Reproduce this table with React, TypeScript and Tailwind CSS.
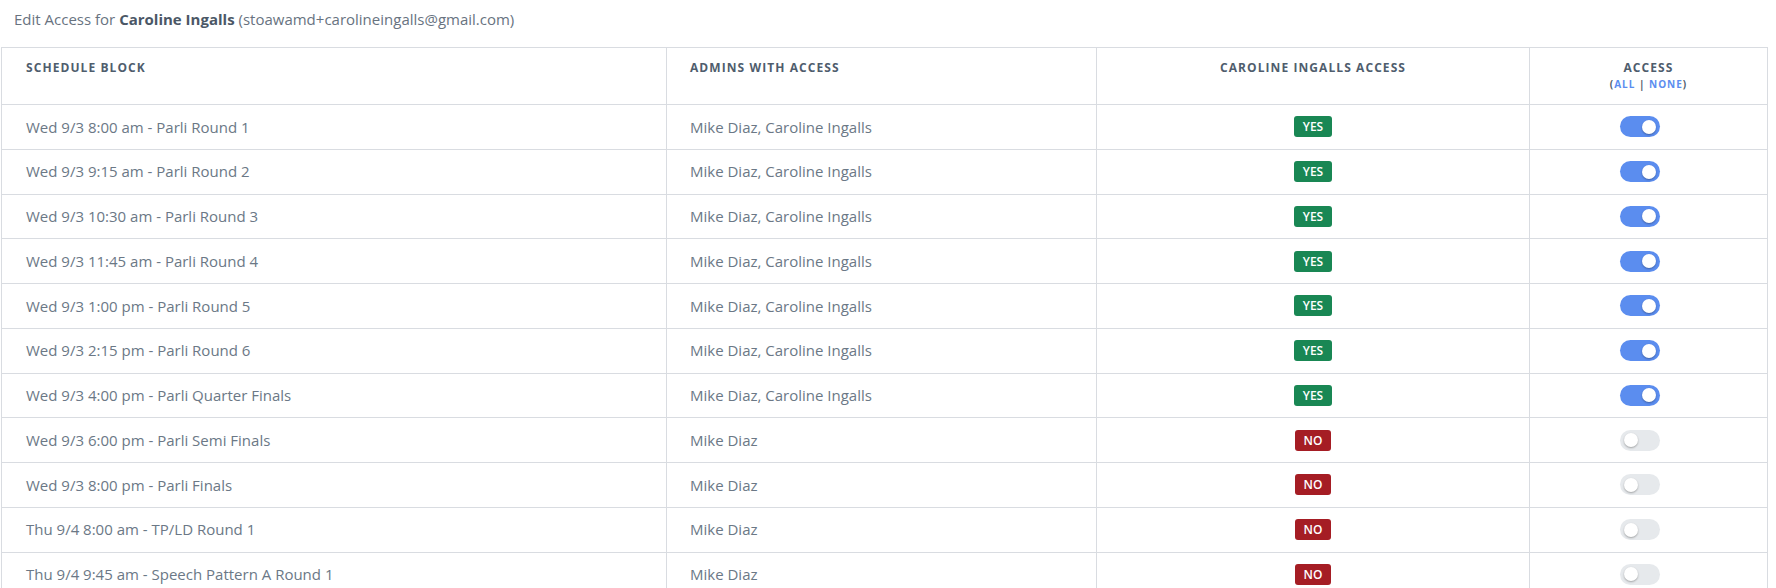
import React from 'react';

type Row = { block: string; admins: string; access: boolean };

const rows: Row[] = [
  { block: 'Wed 9/3 8:00 am - Parli Round 1', admins: 'Mike Diaz, Caroline Ingalls', access: true },
  { block: 'Wed 9/3 9:15 am - Parli Round 2', admins: 'Mike Diaz, Caroline Ingalls', access: true },
  { block: 'Wed 9/3 10:30 am - Parli Round 3', admins: 'Mike Diaz, Caroline Ingalls', access: true },
  { block: 'Wed 9/3 11:45 am - Parli Round 4', admins: 'Mike Diaz, Caroline Ingalls', access: true },
  { block: 'Wed 9/3 1:00 pm - Parli Round 5', admins: 'Mike Diaz, Caroline Ingalls', access: true },
  { block: 'Wed 9/3 2:15 pm - Parli Round 6', admins: 'Mike Diaz, Caroline Ingalls', access: true },
  { block: 'Wed 9/3 4:00 pm - Parli Quarter Finals', admins: 'Mike Diaz, Caroline Ingalls', access: true },
  { block: 'Wed 9/3 6:00 pm - Parli Semi Finals', admins: 'Mike Diaz', access: false },
  { block: 'Wed 9/3 8:00 pm - Parli Finals', admins: 'Mike Diaz', access: false },
  { block: 'Thu 9/4 8:00 am - TP/LD Round 1', admins: 'Mike Diaz', access: false },
  { block: 'Thu 9/4 9:45 am - Speech Pattern A Round 1', admins: 'Mike Diaz', access: false },
];

const cols = 'grid grid-cols-[665px_430px_433px_1fr]';
const th = 'border-r border-[#d9dce1] pt-[12px] text-[12px] font-bold uppercase leading-[15px] tracking-[0.09em] text-[#4f5d6d]';

function Toggle({ on }: { on: boolean }) {
  return (
    <span
      className={`relative inline-flex h-[21px] w-[40px] items-center rounded-full ${
        on ? 'bg-[#5b8def]' : 'bg-[#e6e9ec]'
      }`}
    >
      <span
        className={`absolute top-[3.5px] h-[14px] w-[14px] rounded-full bg-white shadow-[0_1px_2px_rgba(0,0,0,0.3)] ${
          on ? 'left-[22px]' : 'left-[4px]'
        }`}
      />
    </span>
  );
}

export default function App() {
  return (
    <div className="min-h-[588px] bg-white font-['Open_Sans',sans-serif]">
      <p className="pl-[14px] pt-[9px] text-[15px] leading-[20px] text-[#68737f]">
        Edit Access for <span className="font-bold text-[#4b5766]">Caroline Ingalls</span>{' '}
        (stoawamd+carolineingalls@gmail.com)
      </p>

      <div className="ml-px mt-[18px] w-[1767px] border-x border-t border-[#d9dce1]">
        <div className={`${cols} h-[57px] border-b border-[#d9dce1]`}>
          <div className={`${th} pl-[24px]`}>Schedule Block</div>
          <div className={`${th} pl-[23px]`}>Admins with Access</div>
          <div className={`${th} text-center`}>Caroline Ingalls Access</div>
          <div className="pt-[12px] text-center">
            <div className="text-[12px] font-bold uppercase leading-[15px] tracking-[0.09em] text-[#4f5d6d]">
              Access
            </div>
            <div className="mt-[4px] text-[10px] font-bold uppercase leading-[11px] tracking-[0.1em] text-[#4f5d6d]">
              (<span className="text-[#5b8def]">All</span> | <span className="text-[#5b8def]">None</span>)
            </div>
          </div>
        </div>

        {rows.map((r) => (
          <div key={r.block} className={`${cols} h-[44.75px] border-b border-[#d9dce1] text-[15px] text-[#6b7886]`}>
            <div className="flex items-center border-r border-[#d9dce1] pl-[24px]">{r.block}</div>
            <div className="flex items-center border-r border-[#d9dce1] pl-[23px]">{r.admins}</div>
            <div className="flex items-center justify-center border-r border-[#d9dce1]">
              {r.access ? (
                <span className="rounded-[3px] bg-[#198754] px-[9px] py-[2px] text-[12px] font-semibold leading-[17px] text-white">
                  YES
                </span>
              ) : (
                <span className="rounded-[3px] bg-[#a51d24] px-[9px] py-[2px] text-[12px] font-semibold leading-[17px] text-white">
                  NO
                </span>
              )}
            </div>
            <div className="flex items-center justify-center pr-[18px]">
              <Toggle on={r.access} />
            </div>
          </div>
        ))}
      </div>
    </div>
  );
}
